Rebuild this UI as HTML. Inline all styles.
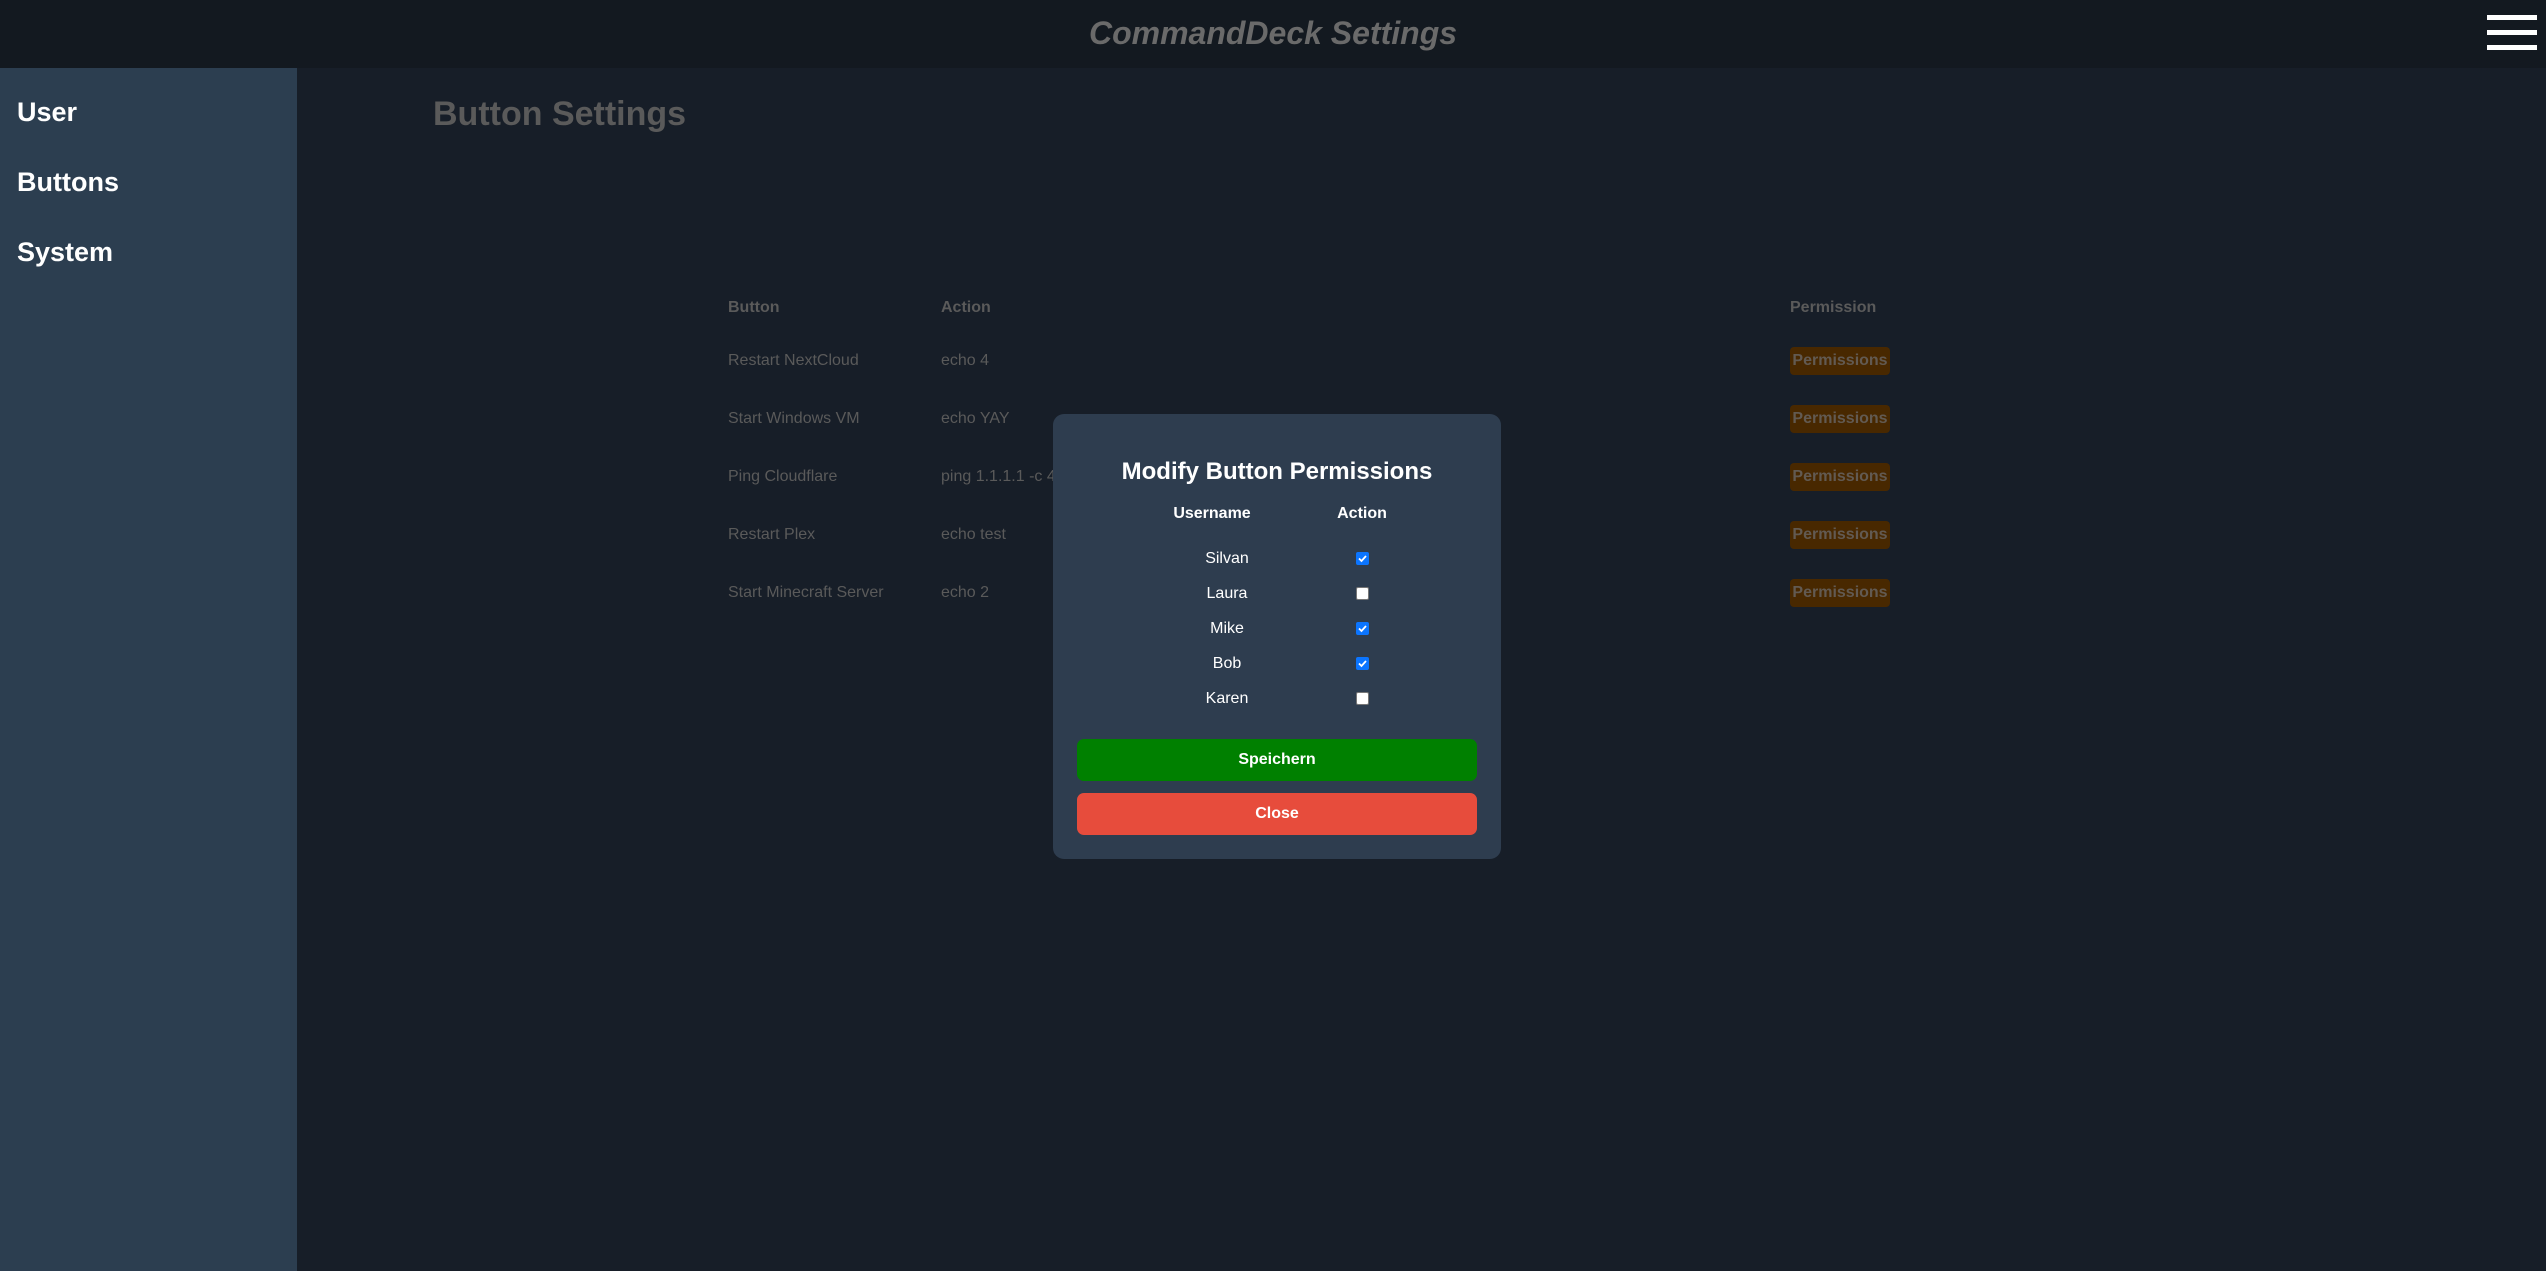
<!DOCTYPE html>
<html><head><meta charset="utf-8"><style>
*{margin:0;padding:0;box-sizing:border-box}
body{width:2546px;height:1271px;background:#171e28;font-family:"Liberation Sans",Arial,sans-serif;position:relative;overflow:hidden}
.hdr{position:absolute;left:0;top:0;width:2546px;height:68px;background:#131920}
.htitle{position:absolute;left:0;width:2546px;top:14px;text-align:center;font:italic bold 32px "Liberation Sans",sans-serif;color:#6a6a6a;line-height:38px}
.bar{position:absolute;left:2487px;width:50px;height:5px;background:#fff}
.side{position:absolute;left:0;top:68px;width:297px;height:1203px;background:#2c3e50}
.side div{position:absolute;left:17px;font-weight:bold;font-size:27px;color:#fff;line-height:30px}
.t{position:absolute;font-size:16px;color:#5a5a5a;line-height:18px}
.b{font-weight:bold}
.perm{position:absolute;left:1790px;width:100px;height:28px;background:#482800;border-radius:4px;color:#625a52;font-weight:bold;font-size:16px;line-height:28px;text-align:center}
.modal{position:absolute;left:1053px;top:414px;width:448px;height:445px;background:#2e3d4f;border-radius:11px}
.m{position:absolute;color:#fff;font-size:16px;line-height:18px;text-align:center}
.cb{position:absolute;left:1356px;width:13px;height:13px;border-radius:2px}
.on{background:#0b75ff}
.off{background:#fff;border:1px solid #777}
.btn{position:absolute;left:1077px;width:400px;height:42px;border-radius:7px;color:#fff;font-weight:bold;font-size:16px;line-height:42px;text-align:center}
</style></head><body>
<div class="hdr"></div>
<div class="htitle">CommandDeck Settings</div>
<div class="bar" style="top:15px"></div>
<div class="bar" style="top:30px"></div>
<div class="bar" style="top:45px"></div>
<div class="side">
<div style="top:29px">User</div>
<div style="top:99px">Buttons</div>
<div style="top:169px">System</div>
</div>
<div style="position:absolute;left:433px;top:94px;font-weight:bold;font-size:34px;color:#5a5a5a;line-height:40px">Button Settings</div>

<div class="t b" style="left:728px;top:299px">Button</div>
<div class="t b" style="left:941px;top:299px">Action</div>
<div class="t b" style="left:1790px;top:299px">Permission</div>

<div class="t" style="left:728px;top:352px">Restart NextCloud</div>
<div class="t" style="left:941px;top:352px">echo 4</div>
<div class="t" style="left:728px;top:410px">Start Windows VM</div>
<div class="t" style="left:941px;top:410px">echo YAY</div>
<div class="t" style="left:728px;top:468px">Ping Cloudflare</div>
<div class="t" style="left:941px;top:468px">ping 1.1.1.1 -c 4</div>
<div class="t" style="left:728px;top:526px">Restart Plex</div>
<div class="t" style="left:941px;top:526px">echo test</div>
<div class="t" style="left:728px;top:584px">Start Minecraft Server</div>
<div class="t" style="left:941px;top:584px">echo 2</div>

<div class="perm" style="top:347px">Permissions</div>
<div class="perm" style="top:405px">Permissions</div>
<div class="perm" style="top:463px">Permissions</div>
<div class="perm" style="top:521px">Permissions</div>
<div class="perm" style="top:579px">Permissions</div>

<div class="modal"></div>
<div class="m" style="left:1053px;width:448px;top:458px;font-size:24px;font-weight:bold;line-height:28px">Modify Button Permissions</div>
<div class="m b" style="left:1152px;width:120px;top:505px">Username</div>
<div class="m b" style="left:1302px;width:120px;top:505px">Action</div>

<div class="m" style="left:1167px;width:120px;top:550px">Silvan</div>
<div class="m" style="left:1167px;width:120px;top:585px">Laura</div>
<div class="m" style="left:1167px;width:120px;top:620px">Mike</div>
<div class="m" style="left:1167px;width:120px;top:655px">Bob</div>
<div class="m" style="left:1167px;width:120px;top:690px">Karen</div>

<svg class="cb on" style="top:552px" viewBox="0 0 13 13"><path d="M3 6.5l2.5 2.5 4.5-5" stroke="#fff" stroke-width="1.8" fill="none"/></svg>
<div class="cb off" style="top:587px"></div>
<svg class="cb on" style="top:622px" viewBox="0 0 13 13"><path d="M3 6.5l2.5 2.5 4.5-5" stroke="#fff" stroke-width="1.8" fill="none"/></svg>
<svg class="cb on" style="top:657px" viewBox="0 0 13 13"><path d="M3 6.5l2.5 2.5 4.5-5" stroke="#fff" stroke-width="1.8" fill="none"/></svg>
<div class="cb off" style="top:692px"></div>

<div class="btn" style="top:739px;background:#008000">Speichern</div>
<div class="btn" style="top:793px;background:#e74c3c">Close</div>
</body></html>
